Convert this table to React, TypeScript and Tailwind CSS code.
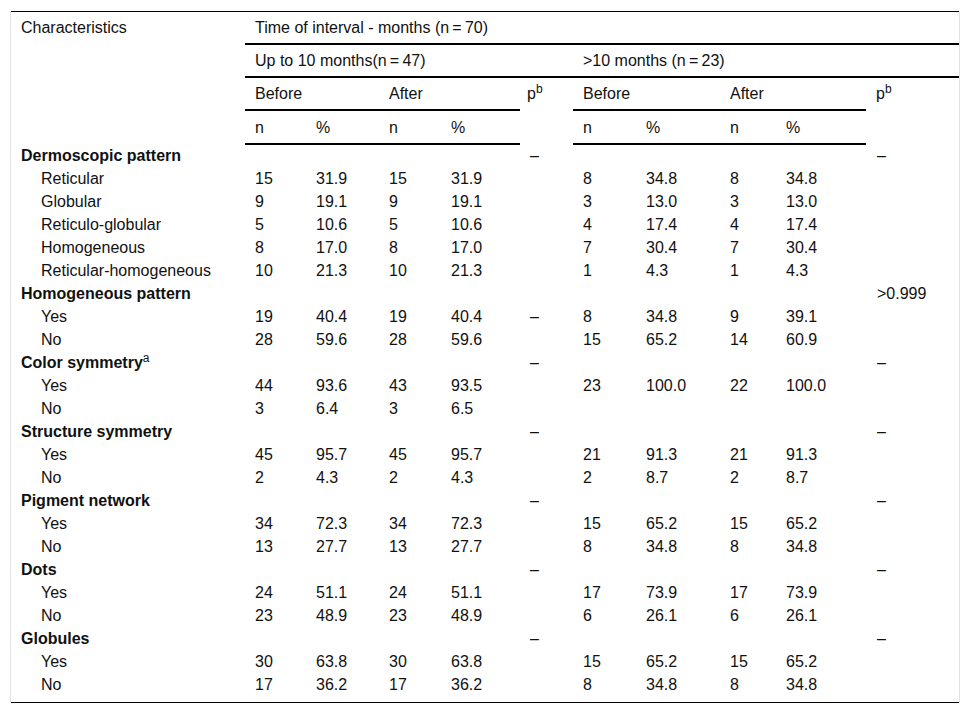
import React from "react";

type Row = {
  label: React.ReactNode;
  head?: boolean;
  v?: (string | null)[]; // 10 values: n,%,n,%,p,n,%,n,%,p
};

const T = "\u2009";

const rows: Row[] = [
  { label: "Dermoscopic pattern", head: true, v: ["", "", "", "", "–", "", "", "", "", "–"] },
  { label: "Reticular", v: ["15", "31.9", "15", "31.9", "", "8", "34.8", "8", "34.8", ""] },
  { label: "Globular", v: ["9", "19.1", "9", "19.1", "", "3", "13.0", "3", "13.0", ""] },
  { label: "Reticulo-globular", v: ["5", "10.6", "5", "10.6", "", "4", "17.4", "4", "17.4", ""] },
  { label: "Homogeneous", v: ["8", "17.0", "8", "17.0", "", "7", "30.4", "7", "30.4", ""] },
  { label: "Reticular-homogeneous", v: ["10", "21.3", "10", "21.3", "", "1", "4.3", "1", "4.3", ""] },
  { label: "Homogeneous pattern", head: true, v: ["", "", "", "", "", "", "", "", "", ">0.999"] },
  { label: "Yes", v: ["19", "40.4", "19", "40.4", "–", "8", "34.8", "9", "39.1", ""] },
  { label: "No", v: ["28", "59.6", "28", "59.6", "", "15", "65.2", "14", "60.9", ""] },
  {
    label: (
      <>
        Color symmetry<sup className="font-normal text-[12px]">a</sup>
      </>
    ),
    head: true,
    v: ["", "", "", "", "–", "", "", "", "", "–"],
  },
  { label: "Yes", v: ["44", "93.6", "43", "93.5", "", "23", "100.0", "22", "100.0", ""] },
  { label: "No", v: ["3", "6.4", "3", "6.5", "", "", "", "", "", ""] },
  { label: "Structure symmetry", head: true, v: ["", "", "", "", "–", "", "", "", "", "–"] },
  { label: "Yes", v: ["45", "95.7", "45", "95.7", "", "21", "91.3", "21", "91.3", ""] },
  { label: "No", v: ["2", "4.3", "2", "4.3", "", "2", "8.7", "2", "8.7", ""] },
  { label: "Pigment network", head: true, v: ["", "", "", "", "–", "", "", "", "", "–"] },
  { label: "Yes", v: ["34", "72.3", "34", "72.3", "", "15", "65.2", "15", "65.2", ""] },
  { label: "No", v: ["13", "27.7", "13", "27.7", "", "8", "34.8", "8", "34.8", ""] },
  { label: "Dots", head: true, v: ["", "", "", "", "–", "", "", "", "", "–"] },
  { label: "Yes", v: ["24", "51.1", "24", "51.1", "", "17", "73.9", "17", "73.9", ""] },
  { label: "No", v: ["23", "48.9", "23", "48.9", "", "6", "26.1", "6", "26.1", ""] },
  { label: "Globules", head: true, v: ["", "", "", "", "–", "", "", "", "", "–"] },
  { label: "Yes", v: ["30", "63.8", "30", "63.8", "", "15", "65.2", "15", "65.2", ""] },
  { label: "No", v: ["17", "36.2", "17", "36.2", "", "8", "34.8", "8", "34.8", ""] },
];

const widths = [234, 61, 73, 62, 79, 53, 63, 84, 56, 90, 93];

export default function App() {
  const hc = "pl-[10px] pr-0 py-[4px] text-left font-normal align-top leading-[23px]";
  const hc4 = "pl-[10px] pr-0 pt-[5px] pb-[4px] text-left font-normal align-top leading-[23px]";
  const line = "border-b-2 border-black";
  return (
    <div
      className="bg-white pt-[11px] pl-[10px] text-[16px] text-[#111]"
      style={{ fontFamily: '"Liberation Sans", Arial, sans-serif' }}
    >
      <div className="w-[950px] border-x border-[#e3e3e3]">
        <div className="border-t border-b border-black pb-[6px]">
          <table className="table-fixed border-collapse w-[948px]">
            <colgroup>
              {widths.map((w, i) => (
                <col key={i} style={{ width: w }} />
              ))}
            </colgroup>
            <thead>
              <tr>
                <th rowSpan={4} className={hc}>
                  Characteristics
                </th>
                <th colSpan={10} className={`${hc} ${line}`}>
                  Time of interval - months (n{T}={T}70)
                </th>
              </tr>
              <tr>
                <th colSpan={5} className={`${hc} ${line}`}>
                  Up to 10 months(n{T}={T}47)
                </th>
                <th colSpan={5} className={`${hc} ${line}`}>
                  &gt;10 months (n{T}={T}23)
                </th>
              </tr>
              <tr>
                <th colSpan={2} className={`${hc} ${line}`}>
                  Before
                </th>
                <th colSpan={2} className={`${hc} ${line}`}>
                  After
                </th>
                <th rowSpan={2} className="pl-[7px] py-[4px] text-left font-normal align-top leading-[23px]">
                  p<sup className="text-[12px]">b</sup>
                </th>
                <th colSpan={2} className={`${hc} ${line}`}>
                  Before
                </th>
                <th colSpan={2} className={`${hc} ${line}`}>
                  After
                </th>
                <th rowSpan={2} className={hc}>
                  p<sup className="text-[12px]">b</sup>
                </th>
              </tr>
              <tr>
                <th className={`${hc4} ${line}`}>n</th>
                <th className={`${hc4} ${line}`}>%</th>
                <th className={`${hc4} ${line}`}>n</th>
                <th className={`${hc4} ${line}`}>%</th>
                <th className={`${hc4} ${line}`}>n</th>
                <th className={`${hc4} ${line}`}>%</th>
                <th className={`${hc4} ${line}`}>n</th>
                <th className={`${hc4} ${line}`}>%</th>
              </tr>
            </thead>
            <tbody>
              {rows.map((r, i) => (
                <tr key={i} className="h-[23px]">
                  <td
                    className={`p-0 leading-[23px] whitespace-nowrap ${
                      r.head ? "pl-[10px] font-bold" : "pl-[30px]"
                    }`}
                  >
                    {r.label}
                  </td>
                  {(r.v ?? []).map((c, j) => (
                    <td
                      key={j}
                      className={`p-0 leading-[23px] whitespace-nowrap ${
                        j === 9 ? "pl-[11px]" : "pl-[10px]"
                      }`}
                    >
                      {c}
                    </td>
                  ))}
                </tr>
              ))}
            </tbody>
          </table>
        </div>
      </div>
    </div>
  );
}
